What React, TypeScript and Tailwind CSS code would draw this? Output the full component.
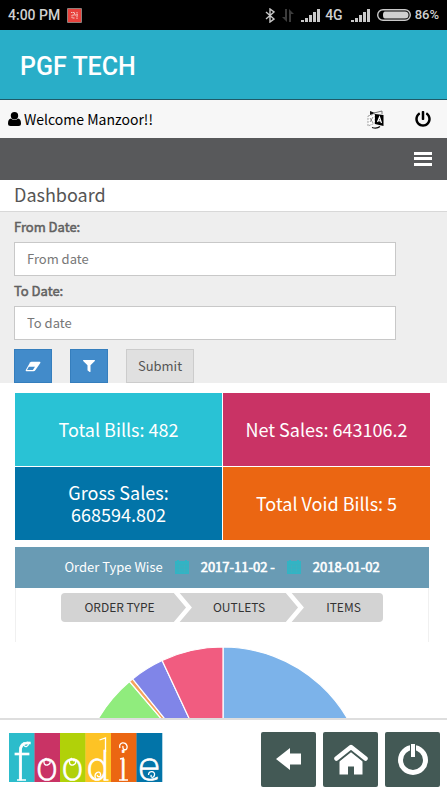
import React from "react";
import { FaPowerOff, FaFilter } from "react-icons/fa";

function SignalBars() {
  return (
    <svg width="19" height="13" viewBox="0 0 19 13" fill="#c8c8c8" aria-hidden="true">
      <rect x="0" y="11" width="3" height="2" />
      <rect x="4" y="9" width="3" height="4" />
      <rect x="8" y="6" width="3" height="7" />
      <rect x="12" y="3" width="3" height="10" />
      <rect x="16" y="0" width="3" height="13" />
    </svg>
  );
}

function StatusBar() {
  return (
    <div className="flex h-[30px] shrink-0 items-center justify-between bg-black px-2 font-['Roboto',sans-serif] text-[14px] leading-5 font-medium text-[#d0d0d0]">
      <div className="flex items-center gap-[7px]">
        <span>4:00 PM</span>
        <svg width="15" height="15" viewBox="0 0 15 15" aria-hidden="true">
          <rect width="15" height="15" rx="1" fill="#8e7f7a" />
          <rect x="1" y="1" width="13" height="13" fill="#e8413c" />
          <path d="M4 4.500h3.500v2.500H5v3h3M10 4v7M8 7h3" stroke="#f6c9c2" strokeDasharray="1.500 0.500" fill="none" />
        </svg>
      </div>
      <div className="flex items-center">
        <svg width="10" height="15" viewBox="0 0 10 15" fill="none" stroke="#c8c8c8" strokeWidth="1.4" aria-hidden="true">
          <path d="M1 4l8 7-4 3V1l4 3-8 7" />
        </svg>
        <svg className="ml-[7px]" width="12" height="13" viewBox="0 0 12 13" fill="#3c3c3c" aria-hidden="true">
          <path d="M3 0h2v13L0 8h3zM7 13h2V5h3L7 0z" />
        </svg>
        <span className="ml-[7px]"><SignalBars /></span>
        <span className="ml-[5px]">4G</span>
        <span className="ml-2"><SignalBars /></span>
        <svg className="ml-[7px]" width="34" height="12" viewBox="0 0 34 12" aria-hidden="true">
          <rect x="0.7" y="0.7" width="32.6" height="10.6" rx="5.3" fill="none" stroke="#c8c8c8" strokeWidth="1.4" />
          <path d="M8 2.500h20a3.500 3.500 0 0 1 0 7H8q-2 0-2-3.500t2-3.500z" fill="#d0d0d0" />
        </svg>
        <span className="ml-1 text-[13px]">86%</span>
      </div>
    </div>
  );
}

function UserIcon() {
  return (
    <svg width="13" height="14" viewBox="0 0 13 14" fill="#000" aria-hidden="true">
      <circle cx="6.500" cy="3.700" r="3.700" />
      <path d="M3 6.500q3.500 3 7 0Q13 7 13 11.500 13 14 10.500 14h-8Q0 14 0 11.500 0 7 3 6.500z" />
    </svg>
  );
}

function MenuIcon() {
  return (
    <svg width="18" height="14" viewBox="0 0 18 14" fill="#fff" aria-hidden="true">
      <rect width="18" height="3" />
      <rect y="5" width="18" height="3" />
      <rect y="11" width="18" height="3" />
    </svg>
  );
}

function EraserIcon() {
  return (
    <svg width="16" height="11" viewBox="0 0 16 11" aria-hidden="true">
      <path d="M6.500 0.700h8q1.300 0 .8 1.200L10.500 9q-.9 1.300-2 1.300h-7Q.2 10.300.8 9L5 1.600q.6-.9 1.500-.9z" fill="#fff" />
      <path d="M3.800 5.800h6.200L7.800 9H2z" fill="#428bca" />
    </svg>
  );
}

function TranslateIcon() {
  return (
    <svg width="17" height="19" viewBox="0 0 17 19" aria-hidden="true">
      <path d="M1 6l7-2v9l-7 3z" fill="#fff" stroke="#777" strokeWidth="0.7" strokeDasharray="2 1" />
      <path d="M3 1l5 2-5 2z" fill="#111" />
      <path d="M7 3l8-2v3" fill="none" stroke="#555" strokeWidth="0.8" />
      <path d="M8 4l8.500 1v11L8 14z" fill="#000" />
      <path d="M10.500 12l2-5 2 6M11 10.500l3 .7" stroke="#fff" strokeWidth="1.2" fill="none" />
      <path d="M3 8l3 5M6 7l-3 5" stroke="#777" strokeWidth="0.8" />
      <path d="M5 17.500q5 1.500 8-1" stroke="#111" strokeWidth="1.200" fill="none" />
    </svg>
  );
}

function CalendarIcon() {
  return (
    <svg width="14" height="14" viewBox="0 0 14 14" aria-hidden="true">
      <rect y="1" width="14" height="13" fill="#32b4c4" />
      <path d="M3 0v3M11 0v3" stroke="#32b4c4" strokeWidth="2" />
      <path d="M1 5h12M1 8h12M1 11h12M4.500 5v8M9.500 5v8" stroke="#45acbd" strokeWidth="0.6" />
    </svg>
  );
}

function DateField({ id, label, placeholder }: { id: string; label: string; placeholder: string }) {
  return (
    <div className="mb-[6px]">
      <label htmlFor={id} className="block h-[24px] text-[13px] leading-[18px] text-[#606060] [-webkit-text-stroke:0.5px_#606060]">{label}</label>
      <input
        id={id}
        type="text"
        placeholder={placeholder}
        className="block h-[34px] w-full border border-[#c8c8c8] bg-white px-3 pb-[2px] text-[13px] leading-5 placeholder:text-[#777]"
      />
    </div>
  );
}

const tiles = [
  { text: "Total Bills: 482", color: "bg-[#29c2d5]" },
  { text: "Net Sales: 643106.2", color: "bg-[#c93365]" },
  { text: "Gross Sales: 668594.802", color: "bg-[#0274a8]" },
  { text: "Total Void Bills: 5", color: "bg-[#eb6612]" },
];

function Chevron() {
  return (
    <svg className="h-full w-[18px] shrink-0" viewBox="0 0 18 29" preserveAspectRatio="none" aria-hidden="true">
      <path d="M1 -2L15 14.500L1 31" fill="none" stroke="#fff" strokeWidth="4.500" />
    </svg>
  );
}

const R = 144;
const slices = [
  { from: 0, to: 170, color: "#7cb3ea" },
  { from: 170, to: 319.5, color: "#90ec7d" },
  { from: 319.5, to: 321.1, color: "#f5a35c" },
  { from: 321.1, to: 335, color: "#8085e8" },
  { from: 335, to: 360, color: "#f15c80" },
];

function point(deg: number) {
  const a = (deg * Math.PI) / 180;
  return `${(R * Math.sin(a)).toFixed(2)} ${(-R * Math.cos(a)).toFixed(2)}`;
}

function PieChart() {
  return (
    <svg className="mx-auto block" width="290" height="290" viewBox="-145 -145 290 290" role="img" aria-label="Orders by type">
      {slices.map((s) => (
        <path
          key={s.from}
          d={`M0 0L${point(s.from)}A${R} ${R} 0 0 1 ${point(s.to)}Z`}
          fill={s.color}
          stroke="#fff"
          strokeWidth="1.2"
        />
      ))}
    </svg>
  );
}

const O_CURL = "M12 25c-4 2-3 8 1 7s3-6 0-4";
const logoLetters = [
  { ch: "f", color: "#2cbccb", size: 50, curl: "M18 9c3 2 0 6-2.500 4s0-4 1-2M8 47h9" },
  { ch: "o", color: "#c93365", size: 39, curl: O_CURL },
  { ch: "o", color: "#b1d109", size: 39, curl: O_CURL },
  { ch: "d", color: "#fdc325", size: 39, curl: "M10 45c-2-5 4-8 5-4s-4 3-3 1M14 7l6-2V19M18 47h5" },
  { ch: "i", color: "#eb6612", size: 39, curl: "M9 15c-2-6 6-7 7-2s-5 5-4 0M9 26l4-1M8 47h9" },
  { ch: "e", color: "#0274a8", size: 39, curl: "M12 42c0-5 7-4 6 0s-5 2-3 0" },
];

function FoodieLogo() {
  return (
    <svg className="overflow-visible" width="153" height="49" viewBox="0 0 153 49" role="img" aria-label="foodie">
      {logoLetters.map((l, i) => (
        <g key={i} transform={`translate(${i * 25.5} 0)`}>
          <rect width="25.8" height="49" fill={l.color} />
          <text
            x="12.5"
            y="47"
            textAnchor="middle"
            fontSize={l.size}
            fill="#fff"
            stroke="#fff"
            strokeWidth="0.7"
            className="font-['DejaVu_Sans',sans-serif] font-extralight"
          >
            {l.ch}
          </text>
          <path d={l.curl} fill="none" stroke="#fff" strokeWidth="1.300" />
        </g>
      ))}
    </svg>
  );
}

function FooterButton({ label, children }: { label: string; children: React.ReactNode }) {
  return (
    <button aria-label={label} className="flex size-[55px] items-center justify-center rounded-[2px] bg-[#435955]">
      {children}
    </button>
  );
}

export default function App() {
  return (
    <div className="flex h-screen flex-col overflow-hidden bg-white font-['Noto_Sans_CJK_SC',sans-serif]">
      <StatusBar />
      <header className="flex h-[70px] shrink-0 items-center border-b border-[#1f5a68] bg-[#29aec8] px-5 pt-1">
        <h1 className="font-['Roboto',sans-serif] text-[25px] leading-8 font-medium text-white">PGF TECH</h1>
      </header>
      <div className="flex h-[38px] shrink-0 items-center justify-between bg-[#f7f7f7] px-2 text-black">
        <div className="flex items-center gap-[3px] text-[14px] leading-6">
          <UserIcon />
          <span>Welcome Manzoor!!</span>
        </div>
        <div className="flex items-center gap-[31px] pr-2">
          <button aria-label="Language"><TranslateIcon /></button>
          <button aria-label="Log out"><FaPowerOff size={16} /></button>
        </div>
      </div>
      <nav className="flex h-[42px] shrink-0 items-center justify-end bg-[#58595b] pr-[15px]">
        <button aria-label="Menu"><MenuIcon /></button>
      </nav>

      <main className="min-h-0 flex-1 overflow-hidden">
        <h2 className="h-8 border-b border-[#d8d8d8] px-[14px] text-[18px] leading-[28px] text-[#555]">Dashboard</h2>
        <form className="bg-[#eee] pt-[6px] pr-[51px] pl-[14px]" onSubmit={(e) => e.preventDefault()}>
          <DateField id="from" label="From Date:" placeholder="From date" />
          <DateField id="to" label="To Date:" placeholder="To date" />
          <div className="flex gap-[18px] pt-[3px]">
            <button type="reset" aria-label="Clear" className="flex h-[34px] w-[38px] items-center justify-center border border-[#357ebd] bg-[#428bca]"><EraserIcon /></button>
            <button type="button" aria-label="Filter" className="flex h-[34px] w-[38px] items-center justify-center border border-[#357ebd] bg-[#428bca] text-white"><FaFilter size={12} /></button>
            <button type="submit" className="h-[34px] w-[68px] border border-[#ccc] bg-[#e0e0e0] text-[13px] leading-5 text-[#555]">Submit</button>
          </div>
        </form>

        <section className="mt-[10px] mr-[17px] ml-[15px] grid grid-cols-2 gap-px">
          {tiles.map((t) => (
            <div key={t.text} className={`flex h-[73px] items-center justify-center px-10 pb-[2px] text-center text-[18px] leading-[22px] text-white ${t.color} even:px-2`}>
              <p>{t.text}</p>
            </div>
          ))}
        </section>

        <section className="mt-[7px] mr-[18px] ml-[15px]">
          <header className="flex h-[41px] items-center justify-center gap-3 bg-[#699bb4] pb-[2px] text-[13px] leading-5 text-white">
            <h3>Order Type Wise</h3>
            <CalendarIcon />
            <span className="[-webkit-text-stroke:0.6px_white]">2017-11-02 -</span>
            <CalendarIcon />
            <span className="[-webkit-text-stroke:0.6px_white]">2018-01-02</span>
          </header>
          <div className="h-[54px] border-x border-[#f0f0f0] px-[45px] pt-[5px]">
            <div className="flex h-[29px] items-center overflow-hidden rounded-[4px] bg-[#d3d3d3] text-[12px] leading-5 text-[#333]">
              <button className="w-[113px] flex-auto pb-[2px] pl-1">ORDER TYPE</button>
              <Chevron />
              <button className="w-[94px] flex-auto pb-[2px]">OUTLETS</button>
              <Chevron />
              <button className="w-[79px] flex-auto pb-[2px]">ITEMS</button>
            </div>
          </div>
        </section>
        <div className="mt-1 mr-[17px] ml-[15px]"><PieChart /></div>
      </main>

      <footer className="flex h-[76px] shrink-0 items-center justify-between border-t-2 border-[#dedede] bg-white pr-[7px] pl-[9px]">
        <FoodieLogo />
        <div className="flex gap-[7px] pt-1">
          <FooterButton label="Back">
            <svg width="25" height="22" viewBox="0 0 25 22" aria-hidden="true">
              <path d="M0 11L14 0v5.500h11v11H14V22z" fill="#fff" />
            </svg>
          </FooterButton>
          <FooterButton label="Home">
            <svg width="34" height="31" viewBox="0 0 34 31" aria-hidden="true">
              <path d="M5.500 17L17 7.500 28.500 17v13.500H20v-8h-6v8H5.500z" fill="#fff" />
              <path d="M2.500 16.500L17 5l14.500 11.500" fill="none" stroke="#435955" strokeWidth="5" />
              <path d="M2.500 14.500L17 3l14.500 11.500" fill="none" stroke="#fff" strokeWidth="4.500" strokeLinecap="round" strokeLinejoin="round" />
            </svg>
          </FooterButton>
          <FooterButton label="Power">
            <svg width="32" height="33" viewBox="0 0 32 33" aria-hidden="true">
              <circle cx="16" cy="17" r="12.500" fill="none" stroke="#fff" strokeWidth="5" />
              <path d="M16 0v15" stroke="#435955" strokeWidth="6" />
              <path d="M16 1v13" stroke="#fff" strokeWidth="4" />
            </svg>
          </FooterButton>
        </div>
      </footer>
    </div>
  );
}
